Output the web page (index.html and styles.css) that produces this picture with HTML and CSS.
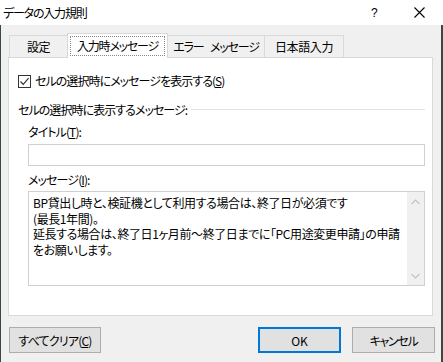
FILE: index.html
```html
<!DOCTYPE html>
<html lang="ja">
<head>
<meta charset="utf-8">
<title>データの入力規則</title>
<link rel="stylesheet" href="styles.css">
</head>
<body>
<div class="window">
  <div class="titlebar">
    <span class="title">データの入力規則</span>
    <span class="help">?</span>
    <span class="close">
      <svg width="11" height="11" viewBox="0 0 11 11"><path d="M0.5 0.5 L10.5 10.5 M10.5 0.5 L0.5 10.5" stroke="#000" stroke-width="1.1" fill="none"/></svg>
    </span>
  </div>
  <div class="dialog">
    <div class="tabs">
      <div class="tab tab-settings">設定</div>
      <div class="tab tab-active"><span class="focus">入力時メッセージ</span></div>
      <div class="tab tab-error">エラー メッセージ</div>
      <div class="tab tab-ime">日本語入力</div>
    </div>
    <div class="panel">
      <div class="check-row">
        <span class="checkbox">
          <svg width="11" height="11" viewBox="0 0 11 11"><path d="M1.5 5.5 L4.2 8.3 L9.6 2.2" stroke="#333" stroke-width="1.2" fill="none"/></svg>
        </span>
        <span class="label">セルの選択時にメッセージを表示する(<u>S</u>)</span>
      </div>
      <div class="group-row">
        <span class="label">セルの選択時に表示するメッセージ:</span>
        <span class="group-line"></span>
      </div>
      <div class="field-label">タイトル(<u>T</u>):</div>
      <div class="input"></div>
      <div class="field-label">メッセージ(<u>I</u>):</div>
      <div class="textarea">
        <div class="text">
          <div class="line">BP貸出し時と、検証機として利用する場合は、終了日が必須です</div>
          <div class="line">(最長1年間)。</div>
          <div class="line">延長する場合は、終了日1ヶ月前～終了日までに「PC用途変更申請」の申請</div>
          <div class="line">をお願いします。</div>
        </div>
        <div class="scrollbar">
          <svg class="arrow" width="9" height="6" viewBox="0 0 9 6"><path d="M0.5 5 L4.5 1 L8.5 5" stroke="#c2c2c2" stroke-width="1.1" fill="none"/></svg>
          <svg class="arrow" width="9" height="6" viewBox="0 0 9 6"><path d="M0.5 1 L4.5 5 L8.5 1" stroke="#c2c2c2" stroke-width="1.1" fill="none"/></svg>
        </div>
      </div>
    </div>
    <div class="buttons">
      <button class="btn btn-clear">すべてクリア(<u>C</u>)</button>
      <span class="spacer"></span>
      <button class="btn btn-ok">OK</button>
      <button class="btn btn-cancel">キャンセル</button>
    </div>
  </div>
</div>
</body>
</html>
```

FILE: styles.css
```css
html, body {
  margin: 0;
  padding: 0;
}
body {
  width: 443px;
  height: 362px;
  overflow: hidden;
  background: #3b4a40;
  font-family: "Noto Sans CJK JP", "Noto Sans", sans-serif;
  font-size: 12px;
  font-feature-settings: "palt";
  color: #000;
}
.window {
  width: 443px;
  height: 362px;
  display: flex;
  flex-direction: column;
}
.titlebar {
  height: 25px;
  background: #fff;
  display: flex;
  align-items: center;
  flex: none;
}
.title {
  margin-left: 3px;
  font-size: 12px;
  letter-spacing: -1.2px;
  flex: 1;
}
.help {
  font-family: "Liberation Sans", sans-serif;
  font-size: 12px;
  width: 10px;
  margin-right: 33px;
}
.close {
  display: flex;
  margin-right: 18px;
}
.dialog {
  flex: 1;
  margin: 0 2px 0 1px;
  background: #f0f0f0;
  padding: 0 8px 0 7px;
  display: flex;
  flex-direction: column;
}
.tabs {
  display: flex;
  align-items: flex-end;
  height: 24px;
  margin-top: 8px;
}
.tab {
  height: 22px;
  box-sizing: border-box;
  border: 1px solid #d9d9d9;
  border-bottom: none;
  background: #f0f0f0;
  display: flex;
  align-items: center;
  justify-content: center;
  margin-right: -1px;
  line-height: 1;
  letter-spacing: -1.2px;
  white-space: pre;
}
.tab-settings { width: 59px; margin-left: 1px; letter-spacing: -0.4px; }
.tab-active {
  width: 101px;
  background: #fff;
  position: relative;
  z-index: 1;
  margin-bottom: -1px;
  height: 25px;
  padding: 2px;
}
.tab-active .focus {
  flex: 1;
  align-self: stretch;
  display: flex;
  align-items: center;
  justify-content: center;
  border: 1px dotted #888;
  padding-bottom: 1px;
}
.tab-error { width: 98px; word-spacing: 5px; }
.tab-ime { width: 80px; letter-spacing: -0.4px; }
.panel {
  height: 259px;
  box-sizing: border-box;
  background: #fff;
  border: 1px solid #d9d9d9;
  padding: 0 7px 0 9px;
  display: flex;
  flex-direction: column;
}
.check-row {
  display: flex;
  align-items: center;
  height: 16px;
  margin-top: 15px;
}
.checkbox {
  width: 13px;
  height: 13px;
  box-sizing: border-box;
  border: 1px solid #333;
  background: #fff;
  display: flex;
  align-items: center;
  justify-content: center;
  margin-right: 4px;
}
.label {
  line-height: 16px;
  white-space: nowrap;
  letter-spacing: -0.95px;
}
.group-row {
  display: flex;
  align-items: center;
  height: 16px;
  margin-top: 13px;
}
.group-line {
  flex: 1;
  height: 1px;
  background: #e3e3e3;
  margin-left: 4px;
  margin-top: -2px;
}
.field-label {
  margin-left: 10px;
  height: 16px;
  line-height: 16px;
  margin-top: 6px;
  letter-spacing: -0.9px;
}
.input {
  margin-left: 10px;
  height: 22px;
  box-sizing: border-box;
  border: 1px solid #d0d0d0;
  background: #fff;
  margin-top: 4px;
}
.textarea {
  margin-left: 10px;
  height: 95px;
  box-sizing: border-box;
  border: 1px solid #d0d0d0;
  background: #fff;
  margin-top: 3px;
  display: flex;
}
.text {
  flex: 1;
  padding: 3px 0 0 4px;
  overflow: hidden;
  letter-spacing: -0.4px;
}
.line {
  line-height: 15.5px;
  white-space: nowrap;
}
.scrollbar {
  width: 17px;
  background: #f0f0f0;
  display: flex;
  flex-direction: column;
  justify-content: space-between;
  align-items: center;
  padding: 7px 0 6px;
  box-sizing: border-box;
}
.arrow {
  display: block;
}
.buttons {
  display: flex;
  margin-top: 11px;
  margin-left: 1px;
  margin-right: -2px;
}
.spacer {
  flex: 1;
}
.btn {
  height: 26px;
  box-sizing: border-box;
  border: 1px solid #adadad;
  background: #e1e1e1;
  font-family: inherit;
  font-size: 12px;
  font-feature-settings: "palt";
  color: #000;
  padding: 0;
  margin: 0;
  letter-spacing: -0.8px;
}
.btn-clear { width: 92px; }
.btn-ok {
  width: 83px;
  border: 2px solid #0078d7;
  margin-right: 11px;
  letter-spacing: 0;
}
.btn-cancel { width: 83px; letter-spacing: -1.3px; }
```
